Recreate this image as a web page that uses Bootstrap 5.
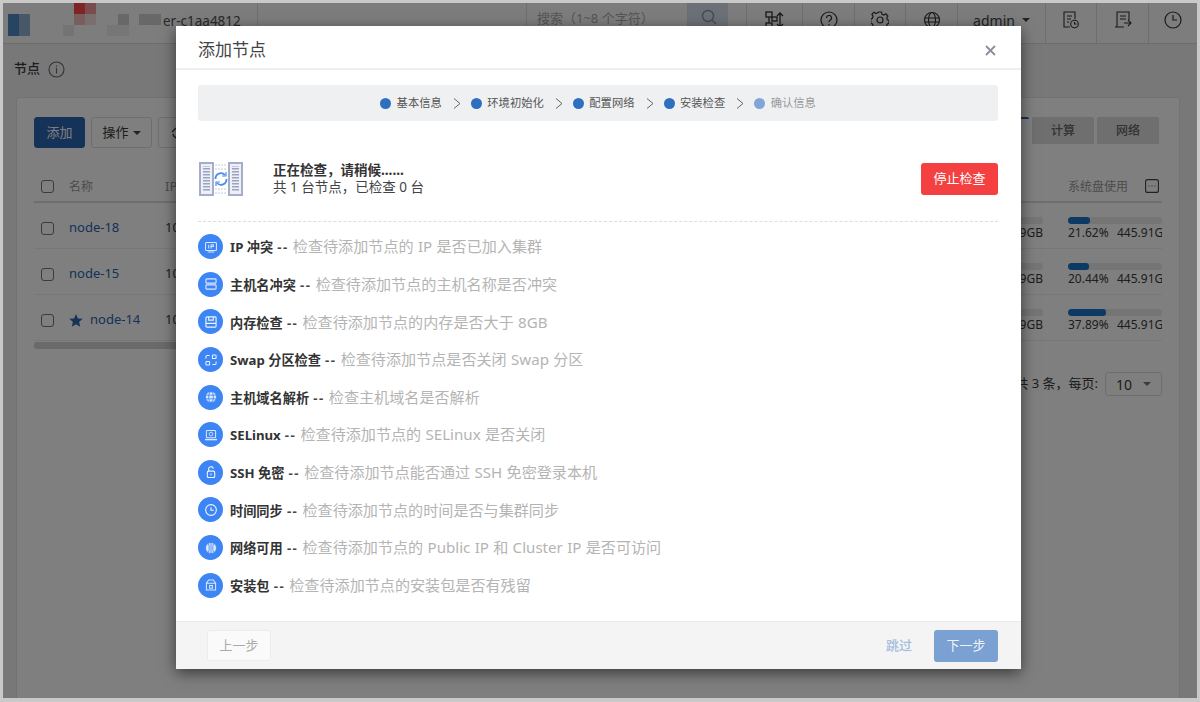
<!DOCTYPE html>
<html lang="zh">
<head>
  <meta charset="UTF-8" />
  <title>添加节点</title>
  <link href="https://cdn.jsdelivr.net/npm/bootstrap@5.3.3/dist/css/bootstrap.min.css" rel="stylesheet" />
  <style>
    html, body { height: 100%; }
    body {
      margin: 0;
      overflow: hidden;
      background: #c9c9c9;
      font-family: "Noto Sans", "Noto Sans CJK SC", sans-serif;
      font-size: 12px;
      color: #3a3a3a;
    }
    .page-frame { position: relative; height: 702px; margin: 0 3px; padding: 3px 0 4px; }
    .page-inner { height: 695px; background: #f1f1f1; overflow: hidden; }
    .top-bar { height: 41px; background: #fafafa; border-bottom: 1px solid #d8d8d8; }
    .logo-box { width: 255px; height: 40px; border-right: 1px solid #ddd; }
    .logo-name { font-size: 13.5px; color: #555; margin-left: 2px; padding-bottom: 4px; }
    .search-box { width: 162px; height: 34px; margin: -1px 0 0 268px; border: 1px solid #ddd; border-radius: 3px 0 0 3px; padding: 6px 10px; color: #aaa; font-size: 13px; }
    .search-btn { width: 40px; height: 34px; margin: -1px 18px 0 0; background: #d8e2f0; padding: 5px 0 0 12px; }
    .top-cell { height: 40px; border-left: 1px solid #ddd; padding-bottom: 6px; color: #444; }
    .user-cell { width: 88px; font-size: 14px; }
    .user-caret { width: 0; height: 0; border: 4px solid transparent; border-top-color: #444; border-bottom: 0; margin-left: 7px; }
    .crumb-row { height: 50px; padding-left: 11px; font-size: 13px; font-weight: 500; }
    .main-card { margin: 3px 17px 0 13px; height: 640px; background: #fff; border: 1px solid #e4e4e4; border-radius: 3px; padding: 19px 17px 0 17px; }
    .tool-btn { height: 31px; border: 1px solid #ddd; border-radius: 3px; background: #fff; font-size: 13px; }
    .tool-add { width: 51px; background: #2a64b0; color: #fff; border-color: #2a64b0; }
    .tool-op { width: 61px; }
    .tool-sync { width: 40px; }
    .tab-group { gap: 3px; padding-right: 3px; }
    .side-tab { width: 62px; height: 27px; background: #dedede; font-weight: 500; color: #666; border-radius: 2px 2px 0 0; }
    .side-tab.is-open { width: 62px; background: #fff; border-top: 2px solid #2a64b0; }
    .node-grid { margin-top: 22px; }
    .node-head, .node-row { height: 46px; border-bottom: 1px solid #eee; padding-top: 5px; }
    .node-head { height: 33px; border-bottom: 2px solid #ddd; color: #999; padding-top: 2px; }
    .node-check { width: 13px; height: 13px; margin: 0 15px 0 7px; border-color: #777; border-radius: 2px; flex: none; }
    .name-cell { width: 96px; }
    .node-link { color: #2a64b0; font-size: 13px; }
    .ip-cell { width: 50px; font-size: 13px; }
    .node-star { margin-right: 7px; }
    .mem-cell { width: 60px; margin-right: 25px; margin-left: auto; line-height: 14px; text-align: right; }
    .usage-cell { width: 94px; line-height: 14px; overflow: hidden; white-space: nowrap; position: relative; }
    .usage-track { height: 7px; background: #eaeaea; border-radius: 3px; margin-bottom: 2px; overflow: hidden; }
    .usage-fill { height: 7px; background: #1b75c9; border-radius: 3px; }
    .usage-num { display: inline-block; width: 49px; }
    .col-menu { margin-left: 17px; vertical-align: -2px; }
    .h-scroll { height: 7px; width: 900px; background: #d4d4d4; border-radius: 3px; margin-top: 1px; }
    .pager-row { margin-top: 23px; font-size: 13px; }
    .page-size { width: 57px; height: 24px; border: 1px solid #ddd; border-radius: 3px; padding: 0 10px; font-size: 14px; margin-left: 7px; }
    .page-caret { width: 0; height: 0; border: 4px solid transparent; border-top-color: #777; border-bottom: 0; }

    .dim-layer { position: absolute; top: 3px; bottom: 4px; left: 0; right: 0; background: #000; opacity: .5; }
    .add-dialog {
      position: absolute;
      left: 173px;
      top: 26px;
      width: 845px;
      height: 643px;
      background: #fff;
      box-shadow: 0 4px 14px rgba(0,0,0,.55);
      display: flex;
      flex-direction: column;
    }
    .dlg-head { height: 44px; border-bottom: 2px solid #eee; padding: 6px 25px 0 22px; }
    .dlg-title { font-size: 17px; color: #444; }
    .dlg-body { flex: 1; padding: 15px 23px 0 22px; }
    .step-bar { height: 36px; padding-top: 1px; background: #eff0f2; border-radius: 3px; font-size: 11.3px; color: #555; }
    .step-dot { width: 11px; height: 11px; border-radius: 50%; background: #2f6fbf; margin-right: 5.5px; }
    .step-dot.pending { background: #80a6d8; }
    .step-later { color: #999; }
    .step-gt { margin: 0 10px 0 11px; }
    .status-row { margin-top: 40px; height: 36px; }
    .status-art { margin-right: 28px; }
    .status-title { font-weight: 700; font-size: 13.5px; color: #333; line-height: 17px; }
    .status-sub { font-size: 13.5px; color: #444; line-height: 17px; }
    .stop-btn { width: 77px; height: 32px; background: #f44040; color: #fff; font-size: 13px; border-radius: 3px; border: 0; padding: 0; }
    .dash-line { border-top: 1px dashed #ddd; margin-top: 24px; }
    .check-list { padding-top: 6px; }
    .check-row { height: 37.6px; }
    .check-icon { width: 25px; height: 25px; border-radius: 50%; background: #3d85f5; margin-right: 7px; flex: none; }
    .check-name { font-weight: 700; color: #333; font-size: 13.2px; }
    .check-dash { font-weight: 700; color: #444; font-size: 13.2px; letter-spacing: 1.5px; margin: 0 1px 0 1px; }
    .check-desc { color: #b4b4b4; font-size: 15.1px; word-spacing: .4px; }
    .dlg-foot { height: 48px; background: #f4f4f4; border-top: 1px solid #eaeaea; padding: 8px 23px 0 31px; }
    .prev-btn { width: 64px; height: 31px; background: #fafafa; border: 1px solid #ececec; border-radius: 3px; color: #aaa; font-size: 13px; padding: 0; }
    .skip-link { color: #a4bcdd; font-size: 13px; margin-right: 22px; font-weight: 500; }
    .next-btn { width: 64px; height: 32px; background: #7ba0d2; border: 0; border-radius: 3px; color: #eef3fa; font-size: 13px; padding: 0; }
  </style>
</head>
<body>
<div class="page-frame">
  <div class="page-inner">
    <div class="top-bar d-flex align-items-start">
      <div class="logo-box d-flex align-items-center">
        <svg width="158" height="40" viewBox="0 0 158 40">
          <rect width="158" height="40" fill="#fafafa"/>
          <rect x="5" y="11" width="11" height="22" fill="#4f8ac6"/>
          <rect x="16" y="11" width="11" height="22" fill="#8fb0d0"/>
          <rect x="71" y="0" width="11" height="11" fill="#ff4a4a"/>
          <rect x="82" y="0" width="11" height="11" fill="#f59a9a"/>
          <rect x="71" y="11" width="11" height="11" fill="#f4bcbc"/>
          <rect x="82" y="11" width="11" height="11" fill="#f6dddd"/>
          <rect x="60" y="22" width="11" height="11" fill="#e8e8e8"/>
          <rect x="115" y="11" width="11" height="11" fill="#d0d0d0"/>
          <rect x="136" y="11" width="22" height="11" fill="#d0d0d0"/>
          <rect x="104" y="22" width="22" height="11" fill="#ededed"/>
        </svg>
        <span class="logo-name">er-c1aa4812</span>
      </div>
      <div class="search-box">搜索（1~8 个字符）</div>
      <div class="search-btn">
        <svg width="18" height="18" viewBox="0 0 18 18" fill="none" stroke="#8a94a3" stroke-width="1.4"><circle cx="8" cy="8" r="5.5"/><path d="M12 12l4 4"/></svg>
      </div>
      <div class="top-cell d-flex align-items-center justify-content-center" style="width:56px">
        <svg width="20" height="18" viewBox="0 0 20 18" fill="none" stroke="#333" stroke-width="1.3"><rect x="1" y="1" width="6" height="5"/><rect x="7" y="6" width="5" height="4"/><rect x="1" y="12" width="6" height="5"/><path d="M4 6v6M15 2v14M12 5l3-3 3 3M12 13l3 3 3-3"/></svg>
      </div>
      <div class="top-cell d-flex align-items-center justify-content-center" style="width:52px">
        <svg width="18" height="18" viewBox="0 0 18 18" fill="none" stroke="#333" stroke-width="1.2"><circle cx="9" cy="9" r="8"/><path d="M6.500 7a2.500 2.500 0 1 1 3.600 2.200c-.8.4-1.100 1-1.100 2"/><path d="M9 13v1.400"/></svg>
      </div>
      <div class="top-cell d-flex align-items-center justify-content-center" style="width:51px">
        <svg width="18" height="18" viewBox="0 0 18 18" fill="none" stroke="#333" stroke-width="1.2"><circle cx="9" cy="9" r="3"/><path d="M7.500 1h3l.5 2.300 1.900.8 2-1.300 2 2.200-1.200 2 .7 1.900 1.600.6v2.800l-1.600.6-.8 1.900 1.200 2-2 2-2-1.200-1.900.8-.5 1.500h-3l-.5-1.500-1.900-.8-2 1.200-2-2 1.200-2-.8-1.900-1.600-.6V7.900l1.600-.6.7-1.900-1.200-2 2-2.200 2 1.300 1.900-.8z"/></svg>
      </div>
      <div class="top-cell d-flex align-items-center justify-content-center" style="width:52px">
        <svg width="18" height="18" viewBox="0 0 18 18" fill="none" stroke="#333" stroke-width="1.100"><circle cx="9" cy="9" r="7.500"/><ellipse cx="9" cy="9" rx="3.500" ry="7.500"/><path d="M1.500 7h15M1.500 11h15"/></svg>
      </div>
      <div class="top-cell user-cell d-flex align-items-center justify-content-center">admin<span class="user-caret"></span></div>
      <div class="top-cell d-flex align-items-center justify-content-center" style="width:51px">
        <svg width="18" height="18" viewBox="0 0 18 18" fill="none" stroke="#333" stroke-width="1.100"><path d="M8 16H2V1h11v7"/><path d="M5 5h5M5 8h4M5 11h2"/><circle cx="12.500" cy="13" r="3.800"/><path d="M12.500 11v2h2"/></svg>
      </div>
      <div class="top-cell d-flex align-items-center justify-content-center" style="width:52px">
        <svg width="18" height="18" viewBox="0 0 18 18" fill="none" stroke="#333" stroke-width="1.100"><path d="M3 16V1h12v8"/><path d="M6 5h6M6 8h6M1 16h9"/><path d="M10 12h7M14 9l3 3-3 3"/></svg>
      </div>
      <div class="top-cell d-flex align-items-center justify-content-center flex-fill">
        <svg width="18" height="18" viewBox="0 0 18 18" fill="none" stroke="#333" stroke-width="1.200"><circle cx="9" cy="9" r="8"/><path d="M9 4v5h4"/></svg>
      </div>
    </div>
    <div class="crumb-row d-flex align-items-center gap-2">节点
      <svg width="17" height="17" viewBox="0 0 17 17" fill="none" stroke="#666" stroke-width="1.100"><circle cx="8.500" cy="8.500" r="7.500"/><path d="M8.500 7v5.500M8.500 4.500v1.200"/></svg>
    </div>
    <div class="main-card">
      <div class="d-flex gap-2 justify-content-between">
        <div class="d-flex" style="gap:6px">
          <div class="tool-btn tool-add d-flex align-items-center justify-content-center">添加</div>
          <div class="tool-btn tool-op d-flex align-items-center justify-content-center">操作<span class="user-caret" style="margin-left:4px"></span></div>
          <div class="tool-btn tool-sync d-flex align-items-center justify-content-center">
            <svg width="14" height="14" viewBox="0 0 14 14" fill="none" stroke="#444" stroke-width="1.400"><path d="M12 6a5 5 0 0 0-9-2L1 6M2 8a5 5 0 0 0 9 2l2-2"/></svg>
          </div>
        </div>
        <div class="tab-group d-flex align-items-start">
          <div class="side-tab is-open"></div>
          <div class="side-tab d-flex align-items-center justify-content-center">计算</div>
          <div class="side-tab d-flex align-items-center justify-content-center">网络</div>
        </div>
      </div>
      <div class="node-grid">
        <div class="node-head d-flex align-items-center">
          <input type="checkbox" class="form-check-input node-check">
          <span class="name-cell">名称</span>
          <span class="ip-cell">IP</span>
          <div class="usage-cell ms-auto">系统盘使用<svg class="col-menu" width="14" height="14" viewBox="0 0 14 14" fill="none" stroke="#444" stroke-width="1.100"><rect x=".6" y=".6" width="12.800" height="12.800" rx="2"/><path d="M3.500 7h1M6.500 7h1M9.500 7h1"/></svg></div>
        </div>
        <div class="node-row d-flex align-items-center">
          <input type="checkbox" class="form-check-input node-check">
          <span class="name-cell node-link">node-18</span>
          <span class="ip-cell">10</span>
          <div class="mem-cell"><div class="usage-track"></div>9GB</div>
          <div class="usage-cell"><div class="usage-track"><div class="usage-fill" style="width:22px"></div></div><span class="usage-num">21.62%</span>445.91G</div>
        </div>
        <div class="node-row d-flex align-items-center">
          <input type="checkbox" class="form-check-input node-check">
          <span class="name-cell node-link">node-15</span>
          <span class="ip-cell">10</span>
          <div class="mem-cell"><div class="usage-track"></div>9GB</div>
          <div class="usage-cell"><div class="usage-track"><div class="usage-fill" style="width:21px"></div></div><span class="usage-num">20.44%</span>445.91G</div>
        </div>
        <div class="node-row d-flex align-items-center">
          <input type="checkbox" class="form-check-input node-check">
          <span class="name-cell node-link"><svg class="node-star" width="14" height="13" viewBox="0 0 14 13" fill="#2a64b0"><path d="M7 0l1.900 4.400 4.800.4-3.600 3.200 1.100 4.700L7 10.200l-4.200 2.500L3.900 8 .3 4.800l4.800-.4z"/></svg>node-14</span>
          <span class="ip-cell">10</span>
          <div class="mem-cell"><div class="usage-track"></div>9GB</div>
          <div class="usage-cell"><div class="usage-track"><div class="usage-fill" style="width:38px"></div></div><span class="usage-num">37.89%</span>445.91G</div>
        </div>
        <div class="h-scroll"></div>
      </div>
      <div class="pager-row d-flex align-items-center justify-content-end">共 3 条，每页:
        <div class="page-size d-flex align-items-center justify-content-between">10<span class="page-caret"></span></div>
      </div>
    </div>
  </div>
  <div class="dim-layer"></div>
  <div class="add-dialog">
    <div class="dlg-head d-flex align-items-center justify-content-between">
      <span class="dlg-title">添加节点</span>
      <svg width="11" height="11" viewBox="0 0 11 11" fill="none" stroke="#8a8f98" stroke-width="1.800"><path d="M1 1l9 9M10 1l-9 9"/></svg>
    </div>
    <div class="dlg-body">
      <div class="step-bar d-flex align-items-center justify-content-center">
        <span class="step-dot"></span>基本信息<svg class="step-gt" width="8" height="11" viewBox="0 0 8 11" fill="none" stroke="#666" stroke-width="1"><path d="M1 .5l6 5-6 5"/></svg>
        <span class="step-dot"></span>环境初始化<svg class="step-gt" width="8" height="11" viewBox="0 0 8 11" fill="none" stroke="#666" stroke-width="1"><path d="M1 .5l6 5-6 5"/></svg>
        <span class="step-dot"></span>配置网络<svg class="step-gt" width="8" height="11" viewBox="0 0 8 11" fill="none" stroke="#666" stroke-width="1"><path d="M1 .5l6 5-6 5"/></svg>
        <span class="step-dot"></span>安装检查<svg class="step-gt" width="8" height="11" viewBox="0 0 8 11" fill="none" stroke="#666" stroke-width="1"><path d="M1 .5l6 5-6 5"/></svg>
        <span class="step-dot pending"></span><span class="step-later">确认信息</span>
      </div>
      <div class="status-row d-flex align-items-center justify-content-between">
        <div class="d-flex align-items-center">
          <svg class="status-art" width="47" height="36" viewBox="0 0 47 36" fill="none">
            <defs><pattern id="rackLines" width="8" height="3" patternUnits="userSpaceOnUse" y="1"><rect width="8" height="1.500" fill="#9aa3c2"/></pattern></defs>
            <rect x="2" y="2" width="13" height="32" fill="#eef0f7" stroke="#a5adc9" stroke-width="2"/>
            <rect x="31" y="2" width="13" height="32" fill="#eef0f7" stroke="#a5adc9" stroke-width="2"/>
            <rect x="5" y="5" width="7" height="26" fill="url(#rackLines)"/>
            <rect x="34" y="5" width="7" height="26" fill="url(#rackLines)"/>
            <path d="M17 4h12M17 8h12M17 28h12M17 32h12" stroke="#c5cbdf" stroke-dasharray="2 1"/>
            <path d="M17.500 18a5.500 5.500 0 0 1 9.500-4M28.500 18a5.500 5.500 0 0 1-9.500 4" stroke="#4a8cf0" stroke-width="1.800"/>
            <path d="M28 11v4h-4M18 25v-4h4" stroke="#4a8cf0" stroke-width="1.200"/>
          </svg>
          <div>
            <div class="status-title">正在检查，请稍候......</div>
            <div class="status-sub">共 1 台节点，已检查 0 台</div>
          </div>
        </div>
        <button class="btn stop-btn">停止检查</button>
      </div>
      <div class="dash-line"></div>
      <div class="check-list">
        <div class="check-row d-flex align-items-center"><span class="check-icon d-flex align-items-center justify-content-center"><svg width="12" height="12" viewBox="0 0 13 13" fill="none" stroke="#dbe8ff" stroke-width="1.100"><rect x=".6" y="1.600" width="11.800" height="8.800" rx="1"/><path d="M3 12h7M4 4v4M6.500 4v4M6.500 4h2.500v2h-2.500"/></svg></span><span><span class="check-name">IP 冲突</span> <span class="check-dash">--</span> <span class="check-desc">检查待添加节点的 IP 是否已加入集群</span></span></div>
        <div class="check-row d-flex align-items-center"><span class="check-icon d-flex align-items-center justify-content-center"><svg width="12" height="12" viewBox="0 0 13 13" fill="none" stroke="#dbe8ff" stroke-width="1.200"><rect x="1" y="1" width="11" height="4.500" rx=".8"/><rect x="1" y="7.500" width="11" height="4.500" rx=".8"/></svg></span><span><span class="check-name">主机名冲突</span> <span class="check-dash">--</span> <span class="check-desc">检查待添加节点的主机名称是否冲突</span></span></div>
        <div class="check-row d-flex align-items-center"><span class="check-icon d-flex align-items-center justify-content-center"><svg width="12" height="12" viewBox="0 0 13 13" fill="none" stroke="#eef4ff" stroke-width="1.200"><rect x="1" y="1" width="11" height="11" rx="1"/><path d="M4 1v3.500h5V1M1 8h11"/></svg></span><span><span class="check-name">内存检查</span> <span class="check-dash">--</span> <span class="check-desc">检查待添加节点的内存是否大于 8GB</span></span></div>
        <div class="check-row d-flex align-items-center"><span class="check-icon d-flex align-items-center justify-content-center"><svg width="12" height="12" viewBox="0 0 13 13" fill="none" stroke="#eef4ff" stroke-width="1.100"><rect x="1" y="8" width="4" height="4" rx=".8"/><rect x="8" y="1" width="4" height="4" rx=".8"/><path d="M5 1.500H2.500A1.500 1.500 0 0 0 1 3v2M8 11.500h2.500A1.500 1.500 0 0 0 12 10V8"/></svg></span><span><span class="check-name">Swap 分区检查</span> <span class="check-dash">--</span> <span class="check-desc">检查待添加节点是否关闭 Swap 分区</span></span></div>
        <div class="check-row d-flex align-items-center"><span class="check-icon d-flex align-items-center justify-content-center"><svg width="12" height="12" viewBox="0 0 13 13" fill="#dbe8ff" stroke="#3d85f5" stroke-width=".9"><circle cx="6.500" cy="6.500" r="6"/><ellipse cx="6.500" cy="6.500" rx="2.500" ry="6" fill="none"/><path d="M.5 4.500h12M.5 8.500h12" fill="none"/></svg></span><span><span class="check-name">主机域名解析</span> <span class="check-dash">--</span> <span class="check-desc">检查主机域名是否解析</span></span></div>
        <div class="check-row d-flex align-items-center"><span class="check-icon d-flex align-items-center justify-content-center"><svg width="12" height="12" viewBox="0 0 13 13" fill="none" stroke="#dbe8ff" stroke-width="1.100"><rect x="1.500" y="1.500" width="10" height="8" rx=".8"/><path d="M0 11.500h13" stroke-width="1.500"/><circle cx="6.500" cy="5.500" r="2" stroke-width=".9"/></svg></span><span><span class="check-name">SELinux</span> <span class="check-dash">--</span> <span class="check-desc">检查待添加节点的 SELinux 是否关闭</span></span></div>
        <div class="check-row d-flex align-items-center"><span class="check-icon d-flex align-items-center justify-content-center"><svg width="12" height="12" viewBox="0 0 13 13" fill="none" stroke="#eef4ff" stroke-width="1.200"><rect x="2.500" y="5.500" width="8" height="7" rx="1.500"/><path d="M4 5.500V3.500a2.500 2.500 0 0 1 5 -.5M6.500 8v2"/></svg></span><span><span class="check-name">SSH 免密</span> <span class="check-dash">--</span> <span class="check-desc">检查待添加节点能否通过 SSH 免密登录本机</span></span></div>
        <div class="check-row d-flex align-items-center"><span class="check-icon d-flex align-items-center justify-content-center"><svg width="12" height="12" viewBox="0 0 13 13" fill="none" stroke="#eef4ff" stroke-width="1.200"><circle cx="6.500" cy="6.500" r="5.800"/><path d="M6.500 3.500v3.200h3"/></svg></span><span><span class="check-name">时间同步</span> <span class="check-dash">--</span> <span class="check-desc">检查待添加节点的时间是否与集群同步</span></span></div>
        <div class="check-row d-flex align-items-center"><span class="check-icon d-flex align-items-center justify-content-center"><svg width="12" height="12" viewBox="0 0 13 13" fill="#dbe8ff" stroke="#3d85f5" stroke-width=".9"><circle cx="6.500" cy="6.500" r="6"/><path d="M6.500 .5v12M3.500 1.500c1.500 3 1.500 7 0 10M9.500 1.500c-1.500 3-1.500 7 0 10" fill="none"/></svg></span><span><span class="check-name">网络可用</span> <span class="check-dash">--</span> <span class="check-desc">检查待添加节点的 Public IP 和 Cluster IP 是否可访问</span></span></div>
        <div class="check-row d-flex align-items-center"><span class="check-icon d-flex align-items-center justify-content-center"><svg width="12" height="12" viewBox="0 0 13 13" fill="none" stroke="#dbe8ff" stroke-width="1.100"><path d="M1.500 4.500L4 1h5l2.500 3.500V12h-10zM1.500 4.500h10"/><rect x="5" y="7" width="3" height="3"/></svg></span><span><span class="check-name">安装包</span> <span class="check-dash">--</span> <span class="check-desc">检查待添加节点的安装包是否有残留</span></span></div>
      </div>
    </div>
    <div class="dlg-foot d-flex justify-content-between align-items-start">
      <button class="btn prev-btn">上一步</button>
      <div class="d-flex align-items-center"><span class="skip-link">跳过</span><button class="btn next-btn">下一步</button></div>
    </div>
  </div>
</div>
</body>
</html>
